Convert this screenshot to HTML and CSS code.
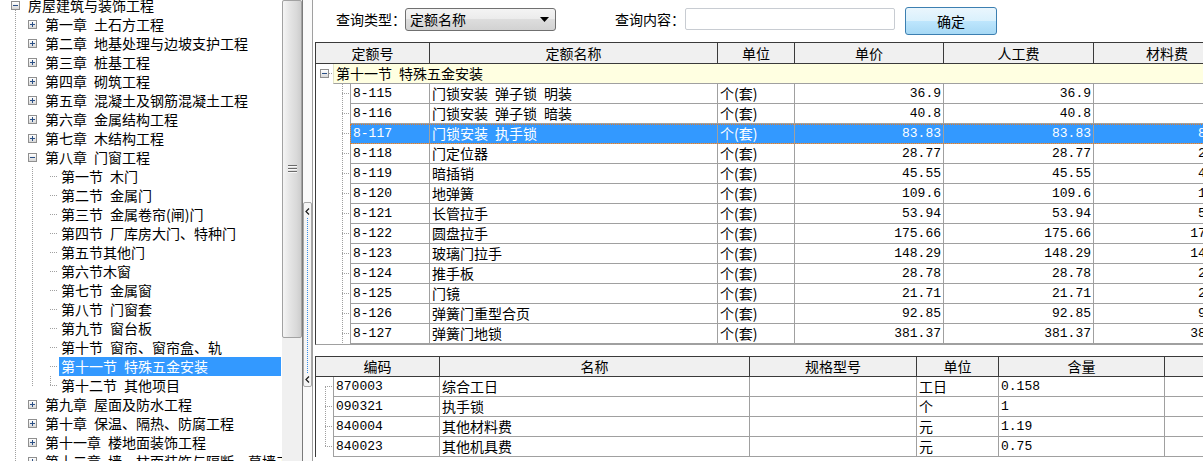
FILE: index.html
```html
<!DOCTYPE html>
<html lang="zh-CN">
<head>
<meta charset="utf-8">
<title>定额查询</title>
<link rel="stylesheet" href="styles.css">
</head>
<body>
<div class="app">
  <div class="left">
    <div class="tree">
      <div class="tree-inner">
        <div class="trow lv0"><span class="xbox"><svg width="7" height="7" viewBox="0 0 7 7"><path d="M1 3.5h5"/></svg></span><span class="tlabel">房屋建筑与装饰工程</span></div>
        <div class="trow lv1"><span class="xbox"><svg width="7" height="7" viewBox="0 0 7 7"><path d="M1 3.5h5M3.5 1v5"/></svg></span><span class="tlabel">第一章&ensp;土石方工程</span></div>
        <div class="trow lv1"><span class="xbox"><svg width="7" height="7" viewBox="0 0 7 7"><path d="M1 3.5h5M3.5 1v5"/></svg></span><span class="tlabel">第二章&ensp;地基处理与边坡支护工程</span></div>
        <div class="trow lv1"><span class="xbox"><svg width="7" height="7" viewBox="0 0 7 7"><path d="M1 3.5h5M3.5 1v5"/></svg></span><span class="tlabel">第三章&ensp;桩基工程</span></div>
        <div class="trow lv1"><span class="xbox"><svg width="7" height="7" viewBox="0 0 7 7"><path d="M1 3.5h5M3.5 1v5"/></svg></span><span class="tlabel">第四章&ensp;砌筑工程</span></div>
        <div class="trow lv1"><span class="xbox"><svg width="7" height="7" viewBox="0 0 7 7"><path d="M1 3.5h5M3.5 1v5"/></svg></span><span class="tlabel">第五章&ensp;混凝土及钢筋混凝土工程</span></div>
        <div class="trow lv1"><span class="xbox"><svg width="7" height="7" viewBox="0 0 7 7"><path d="M1 3.5h5M3.5 1v5"/></svg></span><span class="tlabel">第六章&ensp;金属结构工程</span></div>
        <div class="trow lv1"><span class="xbox"><svg width="7" height="7" viewBox="0 0 7 7"><path d="M1 3.5h5M3.5 1v5"/></svg></span><span class="tlabel">第七章&ensp;木结构工程</span></div>
        <div class="trow lv1"><span class="xbox"><svg width="7" height="7" viewBox="0 0 7 7"><path d="M1 3.5h5"/></svg></span><span class="tlabel">第八章&ensp;门窗工程</span></div>
        <div class="kids8">
          <div class="trow lv2"><span class="tlabel">第一节&ensp;木门</span></div>
          <div class="trow lv2"><span class="tlabel">第二节&ensp;金属门</span></div>
          <div class="trow lv2"><span class="tlabel">第三节&ensp;金属卷帘(闸)门</span></div>
          <div class="trow lv2"><span class="tlabel">第四节&ensp;厂库房大门、特种门</span></div>
          <div class="trow lv2"><span class="tlabel">第五节其他门</span></div>
          <div class="trow lv2"><span class="tlabel">第六节木窗</span></div>
          <div class="trow lv2"><span class="tlabel">第七节&ensp;金属窗</span></div>
          <div class="trow lv2"><span class="tlabel">第八节&ensp;门窗套</span></div>
          <div class="trow lv2"><span class="tlabel">第九节&ensp;窗台板</span></div>
          <div class="trow lv2"><span class="tlabel">第十节&ensp;窗帘、窗帘盒、轨</span></div>
          <div class="trow lv2 sel"><span class="tlabel">第十一节&ensp;特殊五金安装</span></div>
          <div class="trow lv2 last"><span class="tlabel">第十二节&ensp;其他项目</span></div>
        </div>
        <div class="trow lv1"><span class="xbox"><svg width="7" height="7" viewBox="0 0 7 7"><path d="M1 3.5h5M3.5 1v5"/></svg></span><span class="tlabel">第九章&ensp;屋面及防水工程</span></div>
        <div class="trow lv1"><span class="xbox"><svg width="7" height="7" viewBox="0 0 7 7"><path d="M1 3.5h5M3.5 1v5"/></svg></span><span class="tlabel">第十章&ensp;保温、隔热、防腐工程</span></div>
        <div class="trow lv1"><span class="xbox"><svg width="7" height="7" viewBox="0 0 7 7"><path d="M1 3.5h5M3.5 1v5"/></svg></span><span class="tlabel">第十一章&ensp;楼地面装饰工程</span></div>
        <div class="trow lv1"><span class="xbox"><svg width="7" height="7" viewBox="0 0 7 7"><path d="M1 3.5h5M3.5 1v5"/></svg></span><span class="tlabel">第十二章&ensp;墙、柱面装饰与隔断、幕墙工程</span></div>
      </div>
    </div>
    <div class="vscroll">
      <div class="thumb">
        <svg width="9" height="8" viewBox="0 0 9 8"><path class="g-dark" d="M0 0.5h9M0 3.5h9M0 6.5h9"/><path class="g-light" d="M0 1.5h9M0 4.5h9M0 7.5h9"/></svg>
      </div>
      <div class="track"></div>
    </div>
  </div>

  <div class="splitter">
    <div class="handle">
      <svg class="chev" width="5" height="7" viewBox="0 0 5 7"><path d="M4 0.5L1 3.5L4 6.5"/></svg>
      <div class="dots"></div>
      <svg class="chev" width="5" height="7" viewBox="0 0 5 7"><path d="M4 0.5L1 3.5L4 6.5"/></svg>
    </div>
  </div>

  <div class="right">
    <div class="toolbar">
      <span class="tlab">查询类型：</span>
      <div class="select"><span class="sel-text">定额名称</span><svg width="9" height="5" viewBox="0 0 9 5"><path d="M0 0h9L4.5 5z"/></svg></div>
      <span class="tlab tlab2">查询内容：</span>
      <div class="input"></div>
      <div class="btn">确定</div>
    </div>

    <div class="grid top">
      <div class="ghead">
        <div class="h1">定额号</div>
        <div class="h2">定额名称</div>
        <div class="h3">单位</div>
        <div class="h4">单价</div>
        <div class="h5">人工费</div>
        <div class="h6 last">材料费</div>
      </div>
      <div class="grow">
        <div class="gtree"><span class="xbox"><svg width="7" height="7" viewBox="0 0 7 7"><path d="M1 3.5h5"/></svg></span></div>
        <div class="gcell">第十一节&ensp;特殊五金安装</div>
      </div>
      <div class="rows">
        <div class="drow"><div class="dtree"></div><div class="dcells"><div class="c1 code">8-115</div><div class="c2">门锁安装&ensp;弹子锁&ensp;明装</div><div class="c3">个(套)</div><div class="c4 num">36.9</div><div class="c5 num">36.9</div><div class="c6 num">36.9</div></div></div>
        <div class="drow"><div class="dtree"></div><div class="dcells"><div class="c1 code">8-116</div><div class="c2">门锁安装&ensp;弹子锁&ensp;暗装</div><div class="c3">个(套)</div><div class="c4 num">40.8</div><div class="c5 num">40.8</div><div class="c6 num">40.8</div></div></div>
        <div class="drow sel"><div class="dtree"></div><div class="dcells"><div class="c1 code">8-117</div><div class="c2">门锁安装&ensp;执手锁</div><div class="c3">个(套)</div><div class="c4 num">83.83</div><div class="c5 num">83.83</div><div class="c6 num">83.83</div></div></div>
        <div class="drow"><div class="dtree"></div><div class="dcells"><div class="c1 code">8-118</div><div class="c2">门定位器</div><div class="c3">个(套)</div><div class="c4 num">28.77</div><div class="c5 num">28.77</div><div class="c6 num">28.77</div></div></div>
        <div class="drow"><div class="dtree"></div><div class="dcells"><div class="c1 code">8-119</div><div class="c2">暗插销</div><div class="c3">个(套)</div><div class="c4 num">45.55</div><div class="c5 num">45.55</div><div class="c6 num">45.55</div></div></div>
        <div class="drow"><div class="dtree"></div><div class="dcells"><div class="c1 code">8-120</div><div class="c2">地弹簧</div><div class="c3">个(套)</div><div class="c4 num">109.6</div><div class="c5 num">109.6</div><div class="c6 num">109.6</div></div></div>
        <div class="drow"><div class="dtree"></div><div class="dcells"><div class="c1 code">8-121</div><div class="c2">长管拉手</div><div class="c3">个(套)</div><div class="c4 num">53.94</div><div class="c5 num">53.94</div><div class="c6 num">53.94</div></div></div>
        <div class="drow"><div class="dtree"></div><div class="dcells"><div class="c1 code">8-122</div><div class="c2">圆盘拉手</div><div class="c3">个(套)</div><div class="c4 num">175.66</div><div class="c5 num">175.66</div><div class="c6 num">175.66</div></div></div>
        <div class="drow"><div class="dtree"></div><div class="dcells"><div class="c1 code">8-123</div><div class="c2">玻璃门拉手</div><div class="c3">个(套)</div><div class="c4 num">148.29</div><div class="c5 num">148.29</div><div class="c6 num">148.29</div></div></div>
        <div class="drow"><div class="dtree"></div><div class="dcells"><div class="c1 code">8-124</div><div class="c2">推手板</div><div class="c3">个(套)</div><div class="c4 num">28.78</div><div class="c5 num">28.78</div><div class="c6 num">28.78</div></div></div>
        <div class="drow"><div class="dtree"></div><div class="dcells"><div class="c1 code">8-125</div><div class="c2">门镜</div><div class="c3">个(套)</div><div class="c4 num">21.71</div><div class="c5 num">21.71</div><div class="c6 num">21.71</div></div></div>
        <div class="drow"><div class="dtree"></div><div class="dcells"><div class="c1 code">8-126</div><div class="c2">弹簧门重型合页</div><div class="c3">个(套)</div><div class="c4 num">92.85</div><div class="c5 num">92.85</div><div class="c6 num">92.85</div></div></div>
        <div class="drow"><div class="dtree"></div><div class="dcells"><div class="c1 code">8-127</div><div class="c2">弹簧门地锁</div><div class="c3">个(套)</div><div class="c4 num">381.37</div><div class="c5 num">381.37</div><div class="c6 num">381.37</div></div></div>
      </div>
    </div>

    <div class="grid bottom">
      <div class="ghead b">
        <div class="k1">编码</div>
        <div class="k2">名称</div>
        <div class="k3">规格型号</div>
        <div class="k4">单位</div>
        <div class="k5">含量</div>
        <div class="k6 last"></div>
      </div>
      <div class="rows2">
        <div class="drow"><div class="btree"></div><div class="dcells"><div class="b1 code">870003</div><div class="b2">综合工日</div><div class="b3"></div><div class="b4">工日</div><div class="b5 code">0.158</div><div class="b6"></div></div></div>
        <div class="drow"><div class="btree"></div><div class="dcells"><div class="b1 code">090321</div><div class="b2">执手锁</div><div class="b3"></div><div class="b4">个</div><div class="b5 code">1</div><div class="b6"></div></div></div>
        <div class="drow"><div class="btree"></div><div class="dcells"><div class="b1 code">840004</div><div class="b2">其他材料费</div><div class="b3"></div><div class="b4">元</div><div class="b5 code">1.19</div><div class="b6"></div></div></div>
        <div class="drow"><div class="btree"></div><div class="dcells"><div class="b1 code">840023</div><div class="b2">其他机具费</div><div class="b3"></div><div class="b4">元</div><div class="b5 code">0.75</div><div class="b6"></div></div></div>
      </div>
    </div>
  </div>
</div>
</body>
</html>
```

FILE: styles.css
```css
* { box-sizing: border-box; }
html, body { margin: 0; padding: 0; }
body {
  width: 1203px;
  height: 461px;
  overflow: hidden;
  background: #fff;
  color: #000;
  font-family: "Noto Sans CJK SC", "Liberation Sans", sans-serif;
  font-size: 14px;
}
.app { display: flex; height: 461px; }

/* ---------- left tree ---------- */
.left {
  display: flex;
  flex: none;
  width: 303px;
  height: 461px;
  border-right: 1px solid #7a7a7a;
}
.tree {
  width: 282px;
  flex: none;
  overflow: hidden;
  background-image: repeating-linear-gradient(to bottom, #a0a0a0 0 1px, transparent 1px 2px);
  background-size: 1px 100%;
  background-position: 15px 10px;
  background-repeat: no-repeat;
}
.tree-inner { margin-top: -4px; }
.trow {
  display: flex;
  align-items: center;
  height: 19px;
  white-space: nowrap;
}
.tlabel { line-height: 19px; }
.lv0 { padding-left: 11px; }
.lv0 .tlabel { margin-left: 8px; }
.lv1 { padding-left: 28px; }
.lv1 .tlabel { margin-left: 8px; }
.lv2 {
  padding-left: 59px;
  background-image: repeating-linear-gradient(to right, #a0a0a0 0 1px, transparent 1px 2px);
  background-size: 8px 1px;
  background-position: 50px 9px;
  background-repeat: no-repeat;
}
.lv2 .tlabel { padding: 0 2px; }
.lv2.last {
  background-image:
    repeating-linear-gradient(to right, #a0a0a0 0 1px, transparent 1px 2px),
    repeating-linear-gradient(to bottom, #a0a0a0 0 1px, transparent 1px 2px);
  background-size: 8px 1px, 1px 10px;
  background-position: 50px 9px, 50px 0;
}
.lv2.sel .tlabel {
  flex: 1;
  margin-right: 1px;
  background: #3399ff;
  color: #fff;
}
.kids8 {
  background-image: repeating-linear-gradient(to bottom, #a0a0a0 0 1px, transparent 1px 2px);
  background-size: 1px 219px;
  background-position: 32px 0;
  background-repeat: no-repeat;
}
.xbox {
  display: inline-flex;
  flex: none;
  width: 9px;
  height: 9px;
  border: 1px solid #8f8f8f;
  background: linear-gradient(#ffffff, #d8d8d8);
}
.xbox svg { display: block; }
.xbox path { stroke: #2a4f85; stroke-width: 1; fill: none; }

/* scrollbar */
.vscroll {
  width: 20px;
  flex: none;
  display: flex;
  flex-direction: column;
  background: #f0f0f0;
}
.thumb {
  height: 338px;
  flex: none;
  border: 1px solid #a2a2a2;
  border-radius: 2px;
  background: linear-gradient(to right, #f5f5f5, #e6e6e6 35%, #d9d9d9 75%, #cdcdcd);
  display: flex;
  align-items: center;
  justify-content: center;
}
.thumb svg { display: block; }
.g-dark { stroke: #6b6b6b; stroke-width: 1; }
.g-light { stroke: #f8f8f8; stroke-width: 1; }
.track { flex: 1; }

/* splitter */
.splitter {
  width: 9px;
  flex: none;
  background: #fafafa;
  padding-top: 202px;
}
.handle {
  width: 9px;
  height: 185px;
  border: 1px solid #a8a8a8;
  border-radius: 2px;
  background: #f6f6f6;
  display: flex;
  flex-direction: column;
  align-items: center;
  padding: 5px 0 3px;
}
.chev { display: block; flex: none; }
.chev path { stroke: #1a1a1a; stroke-width: 1.2; fill: none; }
.dots {
  flex: 1;
  width: 1px;
  margin: 3px 0;
  background-image: repeating-linear-gradient(to bottom, #3a8ee6 0 1px, transparent 1px 2px);
}

/* ---------- right panel ---------- */
.right {
  flex: 1;
  min-width: 0;
  height: 461px;
  overflow: hidden;
  border-left: 1px solid #a0a0a0;
  padding-left: 2px;
}
.toolbar {
  display: flex;
  align-items: flex-start;
  height: 42px;
  padding-top: 7px;
  padding-left: 21px;
}
.tlab {
  line-height: 23px;
  margin-top: 1px;
  white-space: nowrap;
}
.tlab2 { margin-left: 59px; }
.select {
  width: 151px;
  height: 23px;
  margin-top: 1px;
  margin-left: -1px;
  border: 1px solid #707070;
  border-radius: 3px;
  background: linear-gradient(#f4f4f4, #ebebeb 50%, #dddddd 50%, #d2d2d2);
  display: flex;
  align-items: center;
  justify-content: space-between;
  padding: 0 6px 0 4px;
}
.sel-text { line-height: 21px; }
.select svg { display: block; }
.select path { fill: #000; }
.input {
  width: 210px;
  height: 22px;
  margin-top: 1px;
  border: 1px solid #c8ccd2;
  border-radius: 2px;
  background: #fff;
}
.btn {
  width: 92px;
  height: 28px;
  margin-left: 10px;
  border: 1px solid #3c7fb1;
  border-radius: 3px;
  background: linear-gradient(#eaf6fd, #d9f0fc 50%, #bee6fd 50%, #a7d9f5);
  text-align: center;
  line-height: 26px;
}

/* grids */
.grid {
  border-left: 1px solid #3a3a3a;
  width: 940px;
}
.grid.top { border-bottom: 1px solid #a0a0a0; }
.grid.bottom { margin-top: 11px; }
.ghead {
  display: flex;
  height: 22px;
  border-top: 1px solid #3a3a3a;
  border-bottom: 1px solid #3a3a3a;
  background: #f0f0f0;
}
.ghead.b { height: 21px; }
.ghead > div {
  flex: none;
  border-right: 1px solid #3a3a3a;
  text-align: center;
  line-height: 20px;
  white-space: nowrap;
}
.ghead.b > div { line-height: 19px; }
.ghead > div.last { border-right: none; }
.h1 { width: 114px; }
.h2 { width: 288px; }
.h3 { width: 77px; }
.h4 { width: 149px; }
.h5 { width: 150px; }
.h6 { width: 146px; }
.k1 { width: 124px; }
.k2 { width: 310px; }
.k3 { width: 167px; }
.k4 { width: 82px; }
.k5 { width: 166px; }
.k6 { width: 100px; }

.grow { display: flex; height: 20px; }
.gtree {
  width: 17px;
  flex: none;
  display: flex;
  align-items: center;
  padding-left: 4px;
  padding-bottom: 1px;
  background-image: repeating-linear-gradient(to right, #a0a0a0 0 1px, transparent 1px 2px);
  background-size: 4px 1px;
  background-position: 13px 9px;
  background-repeat: no-repeat;
}
.gcell {
  flex: none;
  width: 907px;
  background: #ffffe1;
  border-bottom: 1px solid #a0a0a0;
  border-left: 1px solid #e4e4c8;
  line-height: 19px;
  padding-left: 2px;
  white-space: nowrap;
}

.rows {
  background-image: repeating-linear-gradient(to bottom, #a0a0a0 0 1px, transparent 1px 2px);
  background-size: 1px 100%;
  background-position: 26px 0;
  background-repeat: no-repeat;
}
.rows2 {
  background-image: repeating-linear-gradient(to bottom, #a0a0a0 0 1px, transparent 1px 2px);
  background-size: 1px 60px;
  background-position: 9px 10px;
  background-repeat: no-repeat;
}
.drow { display: flex; height: 20px; }
.dtree, .btree {
  flex: none;
  background-image: repeating-linear-gradient(to right, #a0a0a0 0 1px, transparent 1px 2px);
  background-size: 8px 1px;
  background-repeat: no-repeat;
}
.dtree { width: 34px; background-position: 26px 9px; }
.btree { width: 17px; background-position: 9px 9px; }
.dcells { display: flex; flex: none; }
.dcells > div {
  flex: none;
  height: 20px;
  border-right: 1px solid #a0a0a0;
  border-bottom: 1px solid #a0a0a0;
  line-height: 19px;
  padding: 0 2px;
  white-space: nowrap;
  overflow: hidden;
}
.c1 { width: 80px; border-left: 1px solid #a0a0a0; }
.c2 { width: 288px; }
.c3 { width: 77px; }
.c4 { width: 149px; }
.c5 { width: 150px; }
.c6 { width: 146px; }
.b1 { width: 107px; border-left: 1px solid #a0a0a0; }
.b2 { width: 310px; }
.b3 { width: 167px; }
.b4 { width: 82px; }
.b5 { width: 166px; }
.b6 { width: 100px; }
.code, .num {
  font-family: "Liberation Mono", "DejaVu Sans Mono", monospace;
  font-size: 13px;
}
.num { text-align: right; }
.drow.sel .dcells {
  background: #3399ff;
  color: #fff;
  outline: 1px dotted #e07a28;
  outline-offset: -1px;
}
```
